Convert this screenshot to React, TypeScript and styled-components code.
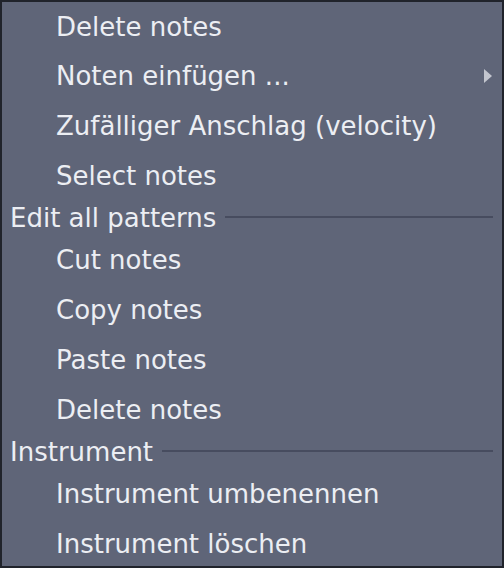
import React from "react";
import styled, { createGlobalStyle } from "styled-components";

const Global = createGlobalStyle`
  html, body { margin: 0; padding: 0; background: #21242c; }
  body { font-family: "DejaVu Sans", "Noto Sans", sans-serif; }
`;

const Menu = styled.div`
  box-sizing: border-box;
  width: 504px;
  height: 568px;
  background: #5f6578;
  border: 2px solid #20232b;
  display: flex;
  flex-direction: column;
  overflow: hidden;
`;

const Item = styled.div`
  position: relative;
  height: 50px;
  flex: 0 0 50px;
  display: flex;
  align-items: center;
  padding-left: 54px;
  font-size: 26px;
  color: #eceef3;
  white-space: nowrap;
  &:first-child { height: 49px; flex-basis: 49px; }
`;

const Arrow = styled.span`
  position: absolute;
  right: 10px;
  top: 50%;
  transform: translateY(-50%);
  width: 0;
  height: 0;
  border-top: 7px solid transparent;
  border-bottom: 7px solid transparent;
  border-left: 8px solid #c3c6cf;
`;

const Header = styled.div`
  height: 34px;
  flex: 0 0 34px;
  display: flex;
  align-items: center;
  gap: 9px;
  padding-left: 8px;
  padding-right: 9px;
  font-size: 26px;
  color: #eceef3;
  white-space: nowrap;
`;

const Rule = styled.div`
  flex: 1;
  height: 2px;
  background: #474c5f;
  margin-top: -2px;
`;

type Entry = { kind: "item"; label: string; sub?: boolean } | { kind: "header"; label: string };

const entries: Entry[] = [
  { kind: "item", label: "Delete notes" },
  { kind: "item", label: "Noten einfügen ...", sub: true },
  { kind: "item", label: "Zufälliger Anschlag (velocity)" },
  { kind: "item", label: "Select notes" },
  { kind: "header", label: "Edit all patterns" },
  { kind: "item", label: "Cut notes" },
  { kind: "item", label: "Copy notes" },
  { kind: "item", label: "Paste notes" },
  { kind: "item", label: "Delete notes" },
  { kind: "header", label: "Instrument" },
  { kind: "item", label: "Instrument umbenennen" },
  { kind: "item", label: "Instrument löschen" },
];

export default function App() {
  return (
    <>
      <Global />
      <Menu>
        {entries.map((e, i) =>
          e.kind === "header" ? (
            <Header key={i}>
              {e.label}
              <Rule />
            </Header>
          ) : (
            <Item key={i}>
              {e.label}
              {e.sub && <Arrow />}
            </Item>
          )
        )}
      </Menu>
    </>
  );
}
